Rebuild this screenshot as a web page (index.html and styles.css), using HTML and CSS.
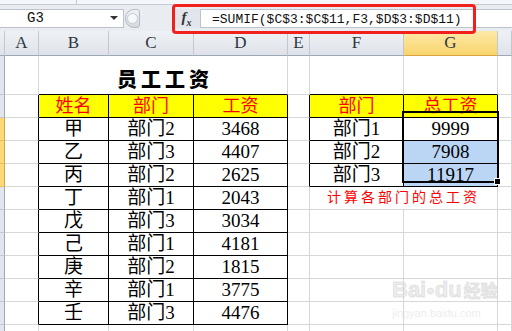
FILE: index.html
```html
<!DOCTYPE html>
<html>
<head>
    <title>员工工资 - SUMIF</title>
    <link rel="stylesheet" href="styles.css">
</head>
<body>
    <div class="ribbon">
        <div class="ribbon-part"></div>
        <div class="ribbon-rest"></div>
    </div>
    <div class="formula-bar">
        <div class="name-box">
            <span class="cell-ref">G3</span>
            <span class="drop-arrow"></span>
        </div>
        <div class="knob"><div class="knob-dot"></div></div>
        <div class="fx-button"><span class="fx">f<sub>x</sub></span></div>
        <div class="formula">=SUMIF($C$3:$C$11,F3,$D$3:$D$11)</div>
    </div>
    <div class="formula-mark"></div>

    <table class="sheet">
        <colgroup>
            <col class="c-rh"><col class="c-a"><col class="c-b"><col class="c-c"><col class="c-d">
            <col class="c-e"><col class="c-f"><col class="c-g"><col class="c-h">
        </colgroup>
        <tr class="col-heads">
            <th class="rh"></th><th>A</th><th>B</th><th>C</th><th>D</th><th>E</th><th>F</th><th class="sel">G</th><th></th>
        </tr>
        <tr class="row-title">
            <td class="rh"></td><td></td><td colspan="3" class="tt title">员工工资</td><td></td><td class="tt"></td><td class="tt"></td><td></td>
        </tr>
        <tr>
            <td class="rh"></td><td class="tl"></td><td class="t head">姓名</td><td class="t head">部门</td><td class="t head">工资</td><td class="tl"></td><td class="t head">部门</td><td class="t head">总工资</td><td></td>
        </tr>
        <tr>
            <td class="rh sel"></td><td class="tl"></td><td class="t">甲</td><td class="t">部门2</td><td class="t">3468</td><td class="tl"></td><td class="t">部门1</td><td class="t active">9999</td><td></td>
        </tr>
        <tr>
            <td class="rh sel"></td><td class="tl"></td><td class="t">乙</td><td class="t">部门3</td><td class="t">4407</td><td class="tl"></td><td class="t">部门2</td><td class="t picked">7908</td><td></td>
        </tr>
        <tr>
            <td class="rh sel"></td><td class="tl"></td><td class="t">丙</td><td class="t">部门2</td><td class="t">2625</td><td class="tl"></td><td class="t">部门3</td><td class="t picked">11917</td><td></td>
        </tr>
        <tr>
            <td class="rh"></td><td class="tl"></td><td class="t">丁</td><td class="t">部门1</td><td class="t">2043</td><td></td><td colspan="2" class="note">计算各部门的总工资</td><td></td>
        </tr>
        <tr>
            <td class="rh"></td><td class="tl"></td><td class="t">戊</td><td class="t">部门3</td><td class="t">3034</td><td></td><td></td><td></td><td></td>
        </tr>
        <tr>
            <td class="rh"></td><td class="tl"></td><td class="t">己</td><td class="t">部门1</td><td class="t">4181</td><td></td><td></td><td></td><td></td>
        </tr>
        <tr>
            <td class="rh"></td><td class="tl"></td><td class="t">庚</td><td class="t">部门2</td><td class="t">1815</td><td></td><td></td><td></td><td></td>
        </tr>
        <tr>
            <td class="rh"></td><td class="tl"></td><td class="t">辛</td><td class="t">部门1</td><td class="t">3775</td><td></td><td></td><td></td><td></td>
        </tr>
        <tr>
            <td class="rh"></td><td class="tl"></td><td class="t">壬</td><td class="t">部门3</td><td class="t">4476</td><td></td><td></td><td></td><td></td>
        </tr>
        <tr>
            <td class="rh"></td><td></td><td></td><td></td><td></td><td></td><td></td><td></td><td></td>
        </tr>
    </table>

    <div class="selection"><div class="fill-handle"></div></div>

    <div class="watermark">
        <div class="wm-logo">Bai<span class="wm-paw">●</span>du<span class="wm-cn">经验</span></div>
        <div class="wm-url">jingyan.baidu.com</div>
    </div>
</body>
</html>
```

FILE: styles.css
```css
body {
    margin: 0;
    width: 512px;
    height: 331px;
    overflow: hidden;
    position: relative;
    background: #fff;
    font-family: "Liberation Serif", "Noto Sans CJK SC", serif;
}

/* top toolbar remnant */
.ribbon {
    display: flex;
    height: 4px;
    background: #f4f6f9;
    border-bottom: 1px solid #c6ccd5;
}
.ribbon-part {
    width: 76px;
    border-right: 1px solid #c6ccd5;
}

/* formula bar */
.formula-bar {
    display: flex;
    align-items: center;
    height: 26px;
    background: #e9edf2;
}
.name-box {
    display: flex;
    align-items: center;
    width: 124px;
    height: 19px;
    background: #fff;
    border: 1px solid #bcc3cd;
    border-left: none;
    box-sizing: border-box;
}
.cell-ref {
    font-family: "Liberation Mono", monospace;
    font-size: 14px;
    padding-left: 27px;
    flex-grow: 1;
    color: #111;
}
.drop-arrow {
    width: 0;
    height: 0;
    margin-right: 5px;
    border-left: 4px solid transparent;
    border-right: 4px solid transparent;
    border-top: 4px solid #333;
}
.knob {
    width: 15px;
    height: 19px;
    margin-left: 1px;
    border-radius: 9px 3px 3px 9px;
    background: linear-gradient(#f1f3f6, #d3d8df);
    border: 1px solid #b6bcc6;
    box-sizing: border-box;
    display: flex;
    align-items: center;
    justify-content: center;
}
.knob-dot {
    width: 9px;
    height: 9px;
    border-radius: 50%;
    background: #f7f8fa;
    border: 1px solid #c7ccd3;
}
.fx-button {
    width: 27px;
    height: 19px;
    margin-left: 33px;
    background: #e2e6ec;
    display: flex;
    align-items: center;
    justify-content: center;
}
.fx {
    font-family: "Liberation Serif", serif;
    font-style: italic;
    font-weight: bold;
    font-size: 15px;
    color: #333;
}
.fx sub {
    font-size: 10px;
}
.formula {
    flex-grow: 1;
    height: 19px;
    line-height: 19px;
    background: #fff;
    border: 1px solid #bcc3cd;
    border-right: none;
    box-sizing: border-box;
    padding-left: 11px;
    font-family: "Liberation Mono", monospace;
    font-size: 13px;
    color: #111;
    white-space: nowrap;
}
.formula-mark {
    position: absolute;
    left: 172px;
    top: 4px;
    width: 304px;
    height: 30px;
    border: 3px solid #f2201c;
    border-radius: 4px;
    box-sizing: border-box;
}

/* worksheet grid */
.sheet {
    table-layout: fixed;
    width: 512px;
    border-collapse: separate;
    border-spacing: 0;
}
.c-rh { width: 5px; }
.c-a { width: 34px; }
.c-b { width: 70px; }
.c-c { width: 85px; }
.c-d { width: 94px; }
.c-e { width: 22px; }
.c-f { width: 94px; }
.c-g { width: 94px; }
.c-h { width: 14px; }

.sheet th,
.sheet td {
    padding: 0;
    height: 22px;
    line-height: 20px;
    text-align: center;
    white-space: nowrap;
    overflow: hidden;
    border-right: 1px solid #d7d7d7;
    border-bottom: 1px solid #d7d7d7;
    font-size: 19px;
    color: #000;
    font-weight: normal;
}
.col-heads th {
    height: 24px;
    background: linear-gradient(#eef1f5, #dfe3e9);
    border-right: 1px solid #c2c8d0;
    border-bottom: 1px solid #9ea8b5;
    font-size: 17px;
    color: #2d3440;
}
.col-heads th.sel {
    background: linear-gradient(#fde9a8, #f8d46c);
    border-bottom: 1px solid #d9a441;
}
.sheet .row-title td {
    height: 33px;
}
.sheet td.rh {
    background: #e2e6ec;
    border-right: 1px solid #9ea8b5;
    border-bottom: 1px solid #c2c8d0;
}
.sheet td.rh.sel {
    background: #fbd878;
    border-right: 1px solid #d9a441;
    border-bottom: 1px solid #e6bd5e;
}

.sheet td.t {
    border-right: 1px solid #000;
    border-bottom: 1px solid #000;
}
.sheet td.tl {
    border-right: 1px solid #000;
}
.sheet td.tt {
    border-bottom: 1px solid #000;
}
.sheet td.head {
    background: #ffff00;
    color: #ff0000;
    font-size: 18px;
}
.sheet td.picked {
    background: #bad6f4;
}

.sheet td.title {
    font-family: "Noto Sans CJK SC", sans-serif;
    font-weight: 900;
    font-size: 20px;
    letter-spacing: 4px;
    text-indent: 4px;
    vertical-align: bottom;
    padding-bottom: 5px;
}
.sheet td.note {
    font-size: 14px;
    letter-spacing: 3px;
    color: #ff0000;
}

/* selected range G3:G5 */
.selection {
    position: absolute;
    left: 402px;
    top: 111px;
    width: 97px;
    height: 72px;
    border: 2px solid #000;
    box-sizing: border-box;
}
.fill-handle {
    position: absolute;
    right: -4px;
    bottom: -4px;
    width: 5px;
    height: 5px;
    background: #000;
    border: 1px solid #fff;
}

/* baidu watermark */
.watermark {
    position: absolute;
    left: 392px;
    top: 276px;
    color: rgba(225, 225, 225, 0.6);
    font-family: "Liberation Sans", "Noto Sans CJK SC", sans-serif;
}
.wm-logo {
    font-size: 22px;
    font-weight: bold;
    line-height: 28px;
    -webkit-text-stroke: 1px rgba(200, 200, 200, 0.4);
}
.wm-paw {
    font-size: 14px;
    vertical-align: top;
}
.wm-cn {
    font-size: 17px;
    margin-left: 2px;
}
.wm-url {
    font-size: 11px;
    line-height: 14px;
}
```
